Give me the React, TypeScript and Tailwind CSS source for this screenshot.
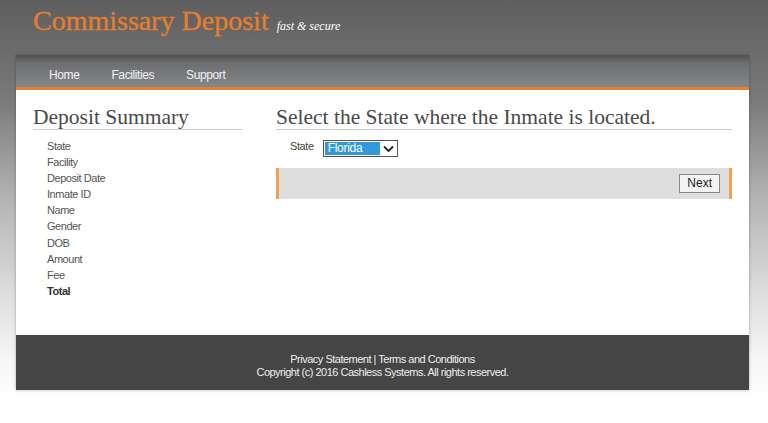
import React from "react";

export default function App() {
  const items = ["State", "Facility", "Deposit Date", "Inmate ID", "Name", "Gender", "DOB", "Amount", "Fee"];
  return (
    <div className="w-[768px] h-[423px] overflow-hidden bg-[linear-gradient(to_bottom,#5e5e5e_0px,#7a7a7a_100px,#b4b4b4_200px,#e0e0e0_300px,#f6f6f6_360px,#ffffff_400px)] font-['Liberation_Sans',Arial,sans-serif]">
      <div className="h-[55px] pl-[33px] pt-[4px] flex items-baseline gap-[8px]">
        <span className="font-['Liberation_Serif',Georgia,serif] text-[28px] leading-[34px] text-[#e87e2a] [-webkit-text-stroke:0.3px_#e87e2a]">Commissary Deposit</span>
        <span className="font-['Liberation_Serif',Georgia,serif] italic text-[12px] text-white">fast &amp; secure</span>
      </div>
      <div className="mx-[16px] w-[733px] shadow-[0_0_3px_rgba(0,0,0,0.3)]">
        <div className="h-[35px] bg-[linear-gradient(to_bottom,#4f5052_0px,#6d6e70_8px,#85868a_32px)] border-b-[3px] border-[#e87e2a] flex items-center pt-[7px] pl-[33px] gap-[34px] text-[12px] tracking-[-0.4px] text-[#f2f2f2]">
          <span>Home</span>
          <span className="ml-[-2px]">Facilities</span>
          <span className="ml-[-2px]">Support</span>
        </div>
        <div className="bg-white h-[245px] flex pt-[16px]">
          <div className="ml-[17px] w-[210px]">
            <div className="font-['Liberation_Serif',Georgia,serif] text-[21.5px] leading-[22px] text-[#4a4a4a] border-b border-[#cfcfcf] pb-[1px]">Deposit Summary</div>
            <div className="pl-[14px] pt-[8px] text-[11px] leading-[16.1px] tracking-[-0.45px] text-[#555]">
              {items.map((t) => (
                <div key={t}>{t}</div>
              ))}
              <div className="font-bold text-[#333]">Total</div>
            </div>
          </div>
          <div className="ml-[33px] w-[456px]">
            <div className="font-['Liberation_Serif',Georgia,serif] text-[21.5px] leading-[22px] text-[#4a4a4a] border-b border-[#cfcfcf] pb-[1px]">Select the State where the Inmate is located.</div>
            <div className="flex items-start pl-[14px] mt-[10px] h-[17px] text-[11px] text-[#444]">
              <span className="mr-[9px] leading-[13px] tracking-[-0.4px]">State</span>
              <div className="w-[75px] h-[17px] border border-[#555] flex items-stretch bg-white">
                <div className="flex-1 bg-[#3399dd] text-white text-[12px] leading-[13px] pl-[3px] m-[1px] tracking-[-0.3px]">Florida</div>
                <div className="w-[16px] flex items-center justify-center">
                  <svg width="11" height="8" viewBox="0 0 11 8"><path d="M1 1.5 L5.5 6 L10 1.5" fill="none" stroke="#222" strokeWidth="1.8" /></svg>
                </div>
              </div>
            </div>
            <div className="mt-[11px] h-[31px] bg-[#dedede] border-x-[3px] border-[#f0a050] flex items-center justify-end pr-[9px]">
              <div className="h-[19px] px-[7px] border border-[#888] bg-[#f3f3f3] text-[12px] leading-[17px] text-[#222]">Next</div>
            </div>
          </div>
        </div>
        <div className="h-[55px] bg-[#454545] flex flex-col items-center justify-center text-[11px] leading-[13px] tracking-[-0.5px] text-[#eeeeee] pt-[6px]">
          <div>Privacy Statement | Terms and Conditions</div>
          <div>Copyright (c) 2016 Cashless Systems. All rights reserved.</div>
        </div>
      </div>
    </div>
  );
}
